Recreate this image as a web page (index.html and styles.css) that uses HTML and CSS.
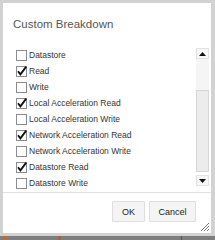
FILE: index.html
```html
<!DOCTYPE html>
<html lang="en">

<head>
  <meta charset="UTF-8">
  <meta name="viewport" content="width=device-width, initial-scale=1.0">
  <title>Custom Breakdown</title>
  <link rel="stylesheet" href="styles.css">
</head>

<body>
  <!-- dialog -->
  <div class="dialog">
    <div class="title">Custom Breakdown</div>

    <div class="list">
      <div class="items">
        <label class="item">
          <svg class="box" width="11" height="11" viewBox="0 0 11 11"><rect x="0.5" y="0.5" width="10" height="10" fill="#fff" stroke="#8c8c8c"/></svg>
          <span>Datastore</span>
        </label>
        <label class="item">
          <svg class="box" width="11" height="11" viewBox="0 0 11 11"><rect x="0.5" y="0.5" width="10" height="10" fill="#fff" stroke="#8c8c8c"/><path d="M2 5.2 L4.4 8.4 L10.2 0.6" fill="none" stroke="#111" stroke-width="1.8"/></svg>
          <span>Read</span>
        </label>
        <label class="item">
          <svg class="box" width="11" height="11" viewBox="0 0 11 11"><rect x="0.5" y="0.5" width="10" height="10" fill="#fff" stroke="#8c8c8c"/></svg>
          <span>Write</span>
        </label>
        <label class="item">
          <svg class="box" width="11" height="11" viewBox="0 0 11 11"><rect x="0.5" y="0.5" width="10" height="10" fill="#fff" stroke="#8c8c8c"/><path d="M2 5.2 L4.4 8.4 L10.2 0.6" fill="none" stroke="#111" stroke-width="1.8"/></svg>
          <span>Local Acceleration Read</span>
        </label>
        <label class="item">
          <svg class="box" width="11" height="11" viewBox="0 0 11 11"><rect x="0.5" y="0.5" width="10" height="10" fill="#fff" stroke="#8c8c8c"/></svg>
          <span>Local Acceleration Write</span>
        </label>
        <label class="item">
          <svg class="box" width="11" height="11" viewBox="0 0 11 11"><rect x="0.5" y="0.5" width="10" height="10" fill="#fff" stroke="#8c8c8c"/><path d="M2 5.2 L4.4 8.4 L10.2 0.6" fill="none" stroke="#111" stroke-width="1.8"/></svg>
          <span>Network Acceleration Read</span>
        </label>
        <label class="item">
          <svg class="box" width="11" height="11" viewBox="0 0 11 11"><rect x="0.5" y="0.5" width="10" height="10" fill="#fff" stroke="#8c8c8c"/></svg>
          <span>Network Acceleration Write</span>
        </label>
        <label class="item">
          <svg class="box" width="11" height="11" viewBox="0 0 11 11"><rect x="0.5" y="0.5" width="10" height="10" fill="#fff" stroke="#8c8c8c"/><path d="M2 5.2 L4.4 8.4 L10.2 0.6" fill="none" stroke="#111" stroke-width="1.8"/></svg>
          <span>Datastore Read</span>
        </label>
        <label class="item">
          <svg class="box" width="11" height="11" viewBox="0 0 11 11"><rect x="0.5" y="0.5" width="10" height="10" fill="#fff" stroke="#8c8c8c"/></svg>
          <span>Datastore Write</span>
        </label>
      </div>

      <!-- scrollbar -->
      <div class="scrollbar">
        <div class="arrow">
          <svg width="7" height="4" viewBox="0 0 7 4"><path d="M0 4 L3.5 0 L7 4 Z" fill="#111"/></svg>
        </div>
        <div class="thumb"></div>
        <div class="track"></div>
        <div class="arrow">
          <svg width="7" height="4" viewBox="0 0 7 4"><path d="M0 0 L3.5 4 L7 0 Z" fill="#111"/></svg>
        </div>
      </div>
    </div>

    <div class="footer">
      <button class="btn btn-ok">OK</button>
      <button class="btn btn-cancel">Cancel</button>
    </div>

    <!-- resize grip -->
    <svg class="grip" width="9" height="9" viewBox="0 0 9 9">
      <path d="M1 9 L9 1 M4 9 L9 4 M7 9 L9 7" stroke="#777" stroke-width="1"/>
    </svg>
  </div>

  <div class="taskbar">
    <span class="mark mark-a"></span>
    <span class="mark mark-b"></span>
    <span class="mark mark-c"></span>
  </div>
</body>

</html>
```

FILE: styles.css
```css
/* page */
body {
  margin: 0;
  width: 215px;
  height: 240px;
  overflow: hidden;
  background-color: #d2d2d2;
  font-family: "Liberation Sans", Arial, sans-serif;
}

/* dialog */
.dialog {
  position: relative;
  display: flex;
  flex-direction: column;
  width: 208px;
  height: 230px;
  margin: 3px 0 0 3px;
  background-color: #fff;
}

.title {
  padding: 14px 0 0 10px;
  font-size: 11.5px;
  line-height: 14px;
  color: #555;
}

/* checkbox list */
.list {
  display: flex;
  margin-top: 16px;
  height: 144px;
}

.items {
  flex: 1;
  display: flex;
  flex-direction: column;
  padding-left: 13px;
}

.item {
  display: flex;
  align-items: center;
  height: 16px;
  font-size: 8.5px;
  color: #333;
}

.box {
  overflow: visible;
  margin-right: 2px;
  flex-shrink: 0;
}

/* scrollbar */
.scrollbar {
  display: flex;
  flex-direction: column;
  width: 13px;
  margin: 1px 2px 0 0;
  height: 138px;
}

.arrow {
  display: flex;
  align-items: center;
  justify-content: center;
  height: 11px;
  background-color: #f7f7f7;
  border: 1px solid #e2e2e2;
  box-sizing: border-box;
}

.thumb {
  height: 31px;
  background-color: #f5f5f5;
}

.track {
  flex: 1;
  background-color: #ececec;
  border: 1px solid #d6d6d6;
  margin-bottom: 3px;
}

/* buttons */
.footer {
  display: flex;
  justify-content: flex-end;
  gap: 4px;
  border-top: 1px solid #e0e0e0;
  margin-top: 1px;
  padding: 8px 15px 0 0;
}

.btn {
  height: 21px;
  padding: 0;
  background-color: #f4f4f4;
  border: 1px solid #dedede;
  border-radius: 1px;
  font-family: "Liberation Sans", Arial, sans-serif;
  font-size: 9px;
  color: #1a1a1a;
}

.btn-ok {
  width: 33px;
}

.btn-cancel {
  width: 47px;
}

.grip {
  position: absolute;
  right: 2px;
  bottom: 2px;
}

/* strip below the dialog */
.taskbar {
  display: flex;
  height: 4px;
  margin-top: 3px;
  background-color: #7e7e7e;
}

.mark {
  width: 3px;
  height: 4px;
}

.mark-a {
  margin-left: 4px;
  background-color: #b07040;
}

.mark-b {
  margin-left: 51px;
  background-color: #9a6a50;
}

.mark-c {
  margin-left: 120px;
  width: 1px;
  background-color: #555;
}
```
